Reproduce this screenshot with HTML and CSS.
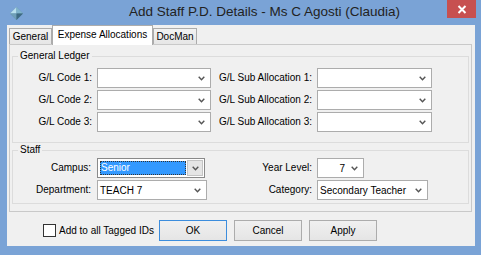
FILE: index.html
```html
<!DOCTYPE html>
<html>
<head>
<meta charset="utf-8">
<link rel="stylesheet" href="styles.css">
</head>
<body>
<div class="window">
  <div class="titlebar">
    <svg class="app-icon" width="13" height="13" viewBox="0 0 13 13">
      <polygon points="6.5,0 13,6.5 6.5,13 0,6.5" fill="#5d8aa3"/>
      <polygon points="6.5,0 6.5,6.5 0,6.5" fill="#b9e0ee"/>
      <polygon points="6.5,0 13,6.5 6.5,6.5" fill="#7fb3cc"/>
      <polygon points="0,6.5 6.5,6.5 6.5,13" fill="#6f9fb8"/>
      <polygon points="6.5,6.5 13,6.5 6.5,13" fill="#3e6a82"/>
    </svg>
    <div class="title">Add Staff P.D. Details - Ms C Agosti (Claudia)</div>
    <div class="close">
      <svg width="10" height="9" viewBox="0 0 10 9"><path d="M1.5 1 L8.5 8 M8.5 1 L1.5 8" stroke="#fff" stroke-width="2" fill="none"/></svg>
    </div>
  </div>
  <div class="client">
    <div class="tabs">
      <div class="tab t-general">General</div>
      <div class="tab active t-expense">Expense Allocations</div>
      <div class="tab t-docman">DocMan</div>
    </div>
    <div class="panel">
      <fieldset class="group gl">
        <legend>General Ledger</legend>
        <div class="grid gl-grid">
          <div class="lbl">G/L Code 1:</div>
          <div class="combo"><span class="val"></span><span class="arrow"><svg width="7" height="5" viewBox="0 0 7 5"><path d="M0.7 0.8 L3.5 3.8 L6.3 0.8" stroke="#555" stroke-width="1.4" fill="none"/></svg></span></div>
          <div class="lbl">G/L Sub Allocation 1:</div>
          <div class="combo"><span class="val"></span><span class="arrow"><svg width="7" height="5" viewBox="0 0 7 5"><path d="M0.7 0.8 L3.5 3.8 L6.3 0.8" stroke="#555" stroke-width="1.4" fill="none"/></svg></span></div>

          <div class="lbl">G/L Code 2:</div>
          <div class="combo"><span class="val"></span><span class="arrow"><svg width="7" height="5" viewBox="0 0 7 5"><path d="M0.7 0.8 L3.5 3.8 L6.3 0.8" stroke="#555" stroke-width="1.4" fill="none"/></svg></span></div>
          <div class="lbl">G/L Sub Allocation 2:</div>
          <div class="combo"><span class="val"></span><span class="arrow"><svg width="7" height="5" viewBox="0 0 7 5"><path d="M0.7 0.8 L3.5 3.8 L6.3 0.8" stroke="#555" stroke-width="1.4" fill="none"/></svg></span></div>

          <div class="lbl">G/L Code 3:</div>
          <div class="combo"><span class="val"></span><span class="arrow"><svg width="7" height="5" viewBox="0 0 7 5"><path d="M0.7 0.8 L3.5 3.8 L6.3 0.8" stroke="#555" stroke-width="1.4" fill="none"/></svg></span></div>
          <div class="lbl">G/L Sub Allocation 3:</div>
          <div class="combo"><span class="val"></span><span class="arrow"><svg width="7" height="5" viewBox="0 0 7 5"><path d="M0.7 0.8 L3.5 3.8 L6.3 0.8" stroke="#555" stroke-width="1.4" fill="none"/></svg></span></div>
        </div>
      </fieldset>
      <fieldset class="group staff">
        <legend>Staff</legend>
        <div class="grid staff-grid">
          <div class="lbl">Campus:</div>
          <div class="combo focus w-campus"><span class="val sel"><span class="seltext">Senior</span></span><span class="dropbtn"><svg width="7" height="5" viewBox="0 0 7 5"><path d="M0.7 0.8 L3.5 3.8 L6.3 0.8" stroke="#555" stroke-width="1.4" fill="none"/></svg></span></div>
          <div class="lbl">Year Level:</div>
          <div class="combo w-year"><span class="val num">7</span><span class="arrow"><svg width="7" height="5" viewBox="0 0 7 5"><path d="M0.7 0.8 L3.5 3.8 L6.3 0.8" stroke="#555" stroke-width="1.4" fill="none"/></svg></span></div>

          <div class="lbl">Department:</div>
          <div class="combo w-dept"><span class="val">TEACH 7</span><span class="arrow"><svg width="7" height="5" viewBox="0 0 7 5"><path d="M0.7 0.8 L3.5 3.8 L6.3 0.8" stroke="#555" stroke-width="1.4" fill="none"/></svg></span></div>
          <div class="lbl">Category:</div>
          <div class="combo w-cat"><span class="val">Secondary Teacher</span><span class="arrow"><svg width="7" height="5" viewBox="0 0 7 5"><path d="M0.7 0.8 L3.5 3.8 L6.3 0.8" stroke="#555" stroke-width="1.4" fill="none"/></svg></span></div>
        </div>
      </fieldset>
    </div>
    <div class="footer">
      <label class="check"><span class="box"></span><span>Add to all Tagged IDs</span></label>
      <div class="buttons">
        <button class="btn default">OK</button>
        <button class="btn">Cancel</button>
        <button class="btn">Apply</button>
      </div>
    </div>
  </div>
</div>
</body>
</html>
```

FILE: styles.css
```css
html, body {
  margin: 0;
  padding: 0;
  background: #7aa3d6;
}
body {
  font-family: "Liberation Sans", Arial, sans-serif;
  font-size: 10px;
  color: #000;
}
.window {
  width: 481px;
  height: 255px;
  box-sizing: border-box;
  background: #7aa3d6;
  padding: 0 6px 9px 7px;
  display: flex;
  flex-direction: column;
  overflow: hidden;
}
.titlebar {
  height: 25px;
  flex: none;
  display: flex;
  align-items: flex-start;
}
.app-icon {
  margin: 7px 0 0 3px;
  flex: none;
}
.title {
  margin: 3px 0 0 106px;
  font-size: 13.5px;
  line-height: 18px;
  color: #222;
  white-space: nowrap;
  flex: 1;
}
.close {
  width: 29px;
  height: 18px;
  margin-right: -1px;
  background: #c75050;
  display: flex;
  align-items: center;
  justify-content: center;
  flex: none;
}
.client {
  flex: 1;
  background: #f0f0f0;
  display: flex;
  flex-direction: column;
}
.tabs {
  height: 19px;
  display: flex;
  align-items: flex-end;
  padding-left: 2px;
  position: relative;
  z-index: 1;
}
.tab {
  box-sizing: border-box;
  height: 16px;
  border: 1px solid #acacac;
  border-bottom: none;
  background: linear-gradient(#f2f2f2, #e6e6e6);
  display: flex;
  align-items: center;
  justify-content: center;
  line-height: 12px;
}
.tab.active {
  height: 20px;
  margin-bottom: -1px;
  background: #fff;
  padding-bottom: 2px;
}
.t-general { width: 43px; }
.t-expense { width: 101px; }
.t-docman { width: 44px; }
.panel {
  box-sizing: border-box;
  margin-left: 2px;
  width: 463px;
  height: 168px;
  border: 1px solid #c9c9c9;
  background: #f0f0f0;
  display: flex;
  flex-direction: column;
}
.group {
  margin: 0 2px;
  border: 1px solid #dcdcdc;
  min-width: 0;
}
.group legend {
  margin-left: 5px;
  padding: 0 2px;
  line-height: 12px;
  font-size: 10px;
}
.gl {
  margin-top: 5px;
  padding: 6px 0 10px 0;
}
.staff {
  margin-top: 1px;
  padding: 2px 0 3px 0;
}
.grid {
  display: grid;
  row-gap: 2px;
  align-items: center;
}
.gl-grid {
  grid-template-columns: 84px 114px 106px 115px;
}
.staff-grid {
  grid-template-columns: 84px 109px 111px 116px;
}
.lbl {
  text-align: right;
  padding-right: 5px;
  line-height: 20px;
  white-space: nowrap;
}
.staff-grid .lbl:nth-child(4n+1) {
  padding-right: 6px;
}
.combo {
  box-sizing: border-box;
  height: 20px;
  border: 1px solid #acacac;
  background: #fff;
  display: flex;
  align-items: center;
}
.combo .val {
  flex: 1;
  padding-left: 2px;
  white-space: nowrap;
  overflow: hidden;
}
.combo .val.num {
  text-align: right;
  padding-right: 1px;
}
.combo .arrow {
  width: 17px;
  flex: none;
  display: flex;
  justify-content: center;
  align-items: center;
}
.w-campus { width: 108px; }
.w-dept { width: 110px; }
.w-year { width: 47px; }
.w-cat { width: 111px; }
.combo.focus {
  border-color: #8a8a8a;
  padding: 1px;
}
.combo .val.sel {
  align-self: stretch;
  padding: 1px;
  display: flex;
}
.seltext {
  flex: 1;
  background: #3399ff;
  color: #fff;
  outline: 1px dotted #333;
  outline-offset: -1px;
  padding-left: 1px;
  line-height: 14px;
}
.dropbtn {
  box-sizing: border-box;
  width: 16px;
  align-self: stretch;
  background: #e5e5e5;
  border: 1px solid #c4c4c4;
  display: flex;
  align-items: center;
  justify-content: center;
  flex: none;
}
.footer {
  flex: 1;
  display: flex;
  align-items: flex-start;
  padding: 8px 0 0 36px;
}
.check {
  width: 116px;
  height: 21px;
  display: flex;
  align-items: center;
  gap: 3px;
  white-space: nowrap;
}
.box {
  box-sizing: border-box;
  width: 13px;
  height: 13px;
  border: 1px solid #333;
  background: #fff;
  flex: none;
}
.buttons {
  display: flex;
  gap: 7px;
}
.btn {
  box-sizing: border-box;
  width: 68px;
  height: 21px;
  border: 1px solid #acacac;
  background: linear-gradient(#f0f0f0, #e5e5e5);
  font-family: "Liberation Sans", Arial, sans-serif;
  font-size: 10px;
  color: #000;
  padding: 0;
  margin: 0;
  border-radius: 0;
}
.btn.default {
  border-color: #3c8ddd;
}
```
